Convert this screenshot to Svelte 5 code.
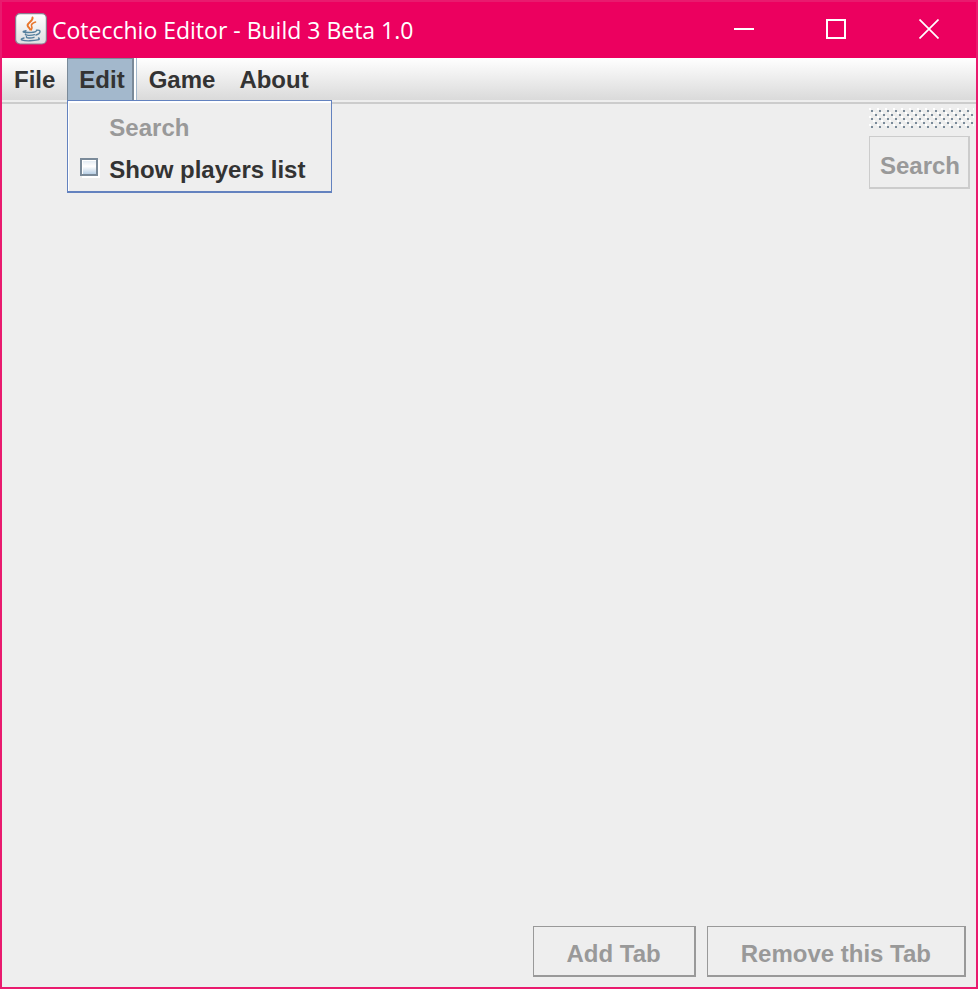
<script>
  let editOpen = $state(true);
  let showPlayers = $state(false);
</script>

<div class="window">
  <header class="titlebar">
    <svg class="logo" viewBox="0 0 32 32" width="32" height="32" aria-hidden="true">
      <defs>
        <linearGradient id="tile" x1="0" y1="0" x2="0" y2="1">
          <stop offset="0" stop-color="#ffffff" />
          <stop offset="1" stop-color="#dddfe1" />
        </linearGradient>
      </defs>
      <rect x="0.6" y="0.6" width="30.8" height="30.4" rx="4.5" fill="url(#tile)" stroke="#8b7d90" stroke-width="1.2" />
      <g fill="none" stroke-linecap="round">
        <path d="M17.500 4.500C18.500 8 12.300 9.500 12.600 12.500C12.800 14.500 15 15 15.200 16.500" stroke="#e8762c" stroke-width="2" />
        <path d="M20.500 9C17.500 10 15.800 11.500 16.600 13.200C17.400 14.800 17.300 15.500 16.300 16.800" stroke="#e8762c" stroke-width="1.600" />
        <path d="M11 17.600C5.500 18.800 9 19.500 14 19.500C18 19.500 20 19 21 18.400" stroke="#557f9d" stroke-width="1.400" />
        <path d="M21.500 17.300C26.500 16 26 21 21 22" stroke="#557f9d" stroke-width="1.400" />
        <path d="M10.500 21C9.500 22.700 16.500 22.700 19.500 21.700" stroke="#557f9d" stroke-width="1.400" />
        <path d="M11.500 23.500C10.500 25.300 16 25.300 19 24.300" stroke="#557f9d" stroke-width="1.400" />
        <path d="M9 25C2.500 26.700 9 28 15 27.800C21 27.600 26.500 26.500 23.500 25" stroke="#557f9d" stroke-width="1.400" />
      </g>
    </svg>
    <h1>Cotecchio Editor - Build 3 Beta 1.0</h1>
    <div class="controls">
      <button aria-label="Minimize">
        <svg width="20" height="20" viewBox="0 0 20 20"><path d="M0 10H20" /></svg>
      </button>
      <button aria-label="Maximize">
        <svg width="20" height="20" viewBox="0 0 20 20"><path d="M1 1H19V19H1Z" /></svg>
      </button>
      <button class="close" aria-label="Close">
        <svg width="20" height="20" viewBox="0 0 20 20"><path d="M0.500 0.500L19.500 19.500M19.500 0.500L0.500 19.500" /></svg>
      </button>
    </div>
  </header>

  <nav class="menubar">
    <button class="menu">File</button>
    <div class="holder">
      <button class="menu" class:open={editOpen} aria-expanded={editOpen} onclick={() => (editOpen = !editOpen)}>Edit</button>
      {#if editOpen}
        <div class="popup">
          <button class="item" disabled>Search</button>
          <label class="item">
            <input type="checkbox" bind:checked={showPlayers} />
            Show players list
          </label>
        </div>
      {/if}
    </div>
    <button class="menu">Game</button>
    <button class="menu">About</button>
  </nav>

  <main>
    <div class="toolbar">
      <div class="grip"></div>
      <button class="tool" disabled>Search</button>
    </div>
    <footer>
      <button disabled>Add Tab</button>
      <button disabled>Remove this Tab</button>
    </footer>
  </main>
</div>

<style>
  :global(body) {
    margin: 0;
  }
  .window {
    box-sizing: border-box;
    min-height: 100vh;
    display: flex;
    flex-direction: column;
    border: 2px solid #e91a6e;
    background: #eeeeee;
    color: #333333;
    font: bold 24px/28px "Liberation Sans", Arial, sans-serif;
  }
  button {
    margin: 0;
    padding: 0;
    border: 0;
    background: none;
    color: inherit;
    font: inherit;
    white-space: nowrap;
  }
  .titlebar {
    display: flex;
    align-items: center;
    height: 56px;
    padding-left: 13px;
    background: #ec005f;
    color: #ffffff;
  }
  .logo {
    flex: none;
    margin-bottom: 2px;
  }
  h1 {
    margin: 0 0 0 5px;
    font: 400 23px/32px "Open Sans", "Noto Sans", sans-serif;
    white-space: nowrap;
  }
  .controls {
    display: flex;
    height: 100%;
    margin-left: auto;
  }
  .controls button {
    display: flex;
    align-items: center;
    justify-content: center;
    width: 92px;
    padding-bottom: 2px;
  }
  .controls .close {
    width: 94px;
  }
  .controls svg {
    fill: none;
    stroke: #ffffff;
    stroke-width: 2;
  }
  .controls .close svg {
    stroke-width: 1.7;
  }
  .menubar {
    display: flex;
    height: 42px;
    background: linear-gradient(#ffffff, #dadada);
    box-shadow: 0 2px #eeeeee, 0 4px #cccccc;
  }
  .holder {
    position: relative;
    display: flex;
  }
  .menu {
    box-sizing: border-box;
    height: 42px;
    padding: 0 12px 0 11px;
    border: 1px solid transparent;
    border-width: 1px 0 0 1px;
  }
  .menu.open {
    padding-right: 7px;
    margin-right: 3px;
    border-color: #7a8a99;
    border-right: 2px solid #7a8a99;
    background: #a3b8cc;
    box-shadow: 2px 0 #ffffff, 3px 0 #a3b8cc;
  }
  .popup {
    position: absolute;
    top: 42px;
    left: 0;
    border: 1px solid #6382bf;
    border-bottom-width: 2px;
    background: #eeeeee;
    box-shadow: inset 1px 2px #ffffff;
    padding: 6px 26px 0 12px;
    box-sizing: border-box;
  }
  .item {
    display: flex;
    align-items: center;
    height: 42px;
    padding-left: 29px;
    white-space: nowrap;
  }
  label.item {
    padding-left: 0;
  }
  button:disabled {
    color: #999999;
  }
  input {
    appearance: none;
    box-sizing: border-box;
    width: 18px;
    height: 18px;
    margin: 0 11px 6px 0;
    border: 2px solid #7a8a99;
    background: linear-gradient(#dfe9f2, #ffffff 45%, #b8cfe5);
    box-shadow: 2px 2px #ffffff, inset 1px 1px #ffffff;
  }
  input:checked {
    background: #7a8a99;
  }
  main {
    flex: 1;
    display: flex;
    flex-direction: column;
    justify-content: space-between;
    align-items: flex-end;
    padding: 8px 2px 10px;
  }
  .toolbar {
    display: flex;
    flex-direction: column;
    align-items: flex-start;
    gap: 8px;
  }
  .grip {
    width: 100%;
    height: 20px;
    background: url("data:image/svg+xml,%3Csvg xmlns='http://www.w3.org/2000/svg' width='8' height='8' shape-rendering='crispEdges'%3E%3Cpath fill='%23fff' d='M0 0h2v2H0zM4 4h2v2H4z'/%3E%3Cpath fill='%237a8a99' d='M2 2h2v2H2zM6 6h2v2H6z'/%3E%3C/svg%3E");
  }
  .tool {
    height: 53px;
    margin-right: 4px;
    padding: 8px 8px 0 10px;
    border: 1px solid #cccccc;
    border-width: 1px 2px 2px 1px;
  }
  footer {
    display: flex;
    gap: 11px;
    padding-right: 8px;
  }
  footer button {
    height: 51px;
    padding: 6px 33px 0;
    border: 1px solid #999999;
    border-width: 1px 2px 2px 1px;
  }
</style>
